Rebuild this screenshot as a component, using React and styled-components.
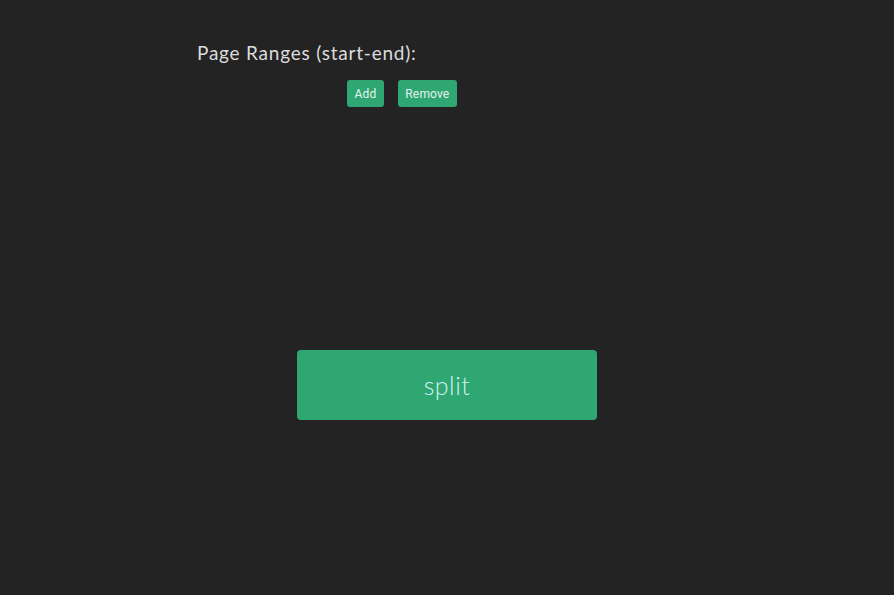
import React from "react";
import styled, { createGlobalStyle } from "styled-components";

const Global = createGlobalStyle`
  html, body { margin: 0; padding: 0; background: #232323; }
  body { width: 894px; height: 595px; overflow: hidden; }
`;

const Page = styled.div`
  width: 894px;
  height: 595px;
  background: #232323;
  display: flex;
  flex-direction: column;
  align-items: center;
  padding-top: 42px;
  box-sizing: border-box;
`;

const Form = styled.div`
  width: 500px;
  display: flex;
  flex-direction: column;
`;

const Label = styled.div`
  font-family: "Lato", "Open Sans", sans-serif;
  font-size: 19px;
  color: #dcdcdc;
  letter-spacing: 0.78px;
  line-height: 22px;
`;

const ButtonRow = styled.div`
  display: flex;
  gap: 14px;
  margin-top: 16px;
  padding-left: 150px;
`;

const SmallButton = styled.button`
  height: 27px;
  padding: 0 7.5px;
  border: none;
  border-radius: 3px;
  background: #2ea772;
  color: #e4f2ee;
  font-family: "Roboto", "Liberation Sans", sans-serif;
  font-size: 12px;
  letter-spacing: 0.15px;
  cursor: pointer;
`;

const SplitButton = styled.button`
  margin-top: 243px;
  width: 300px;
  height: 70px;
  border: none;
  border-radius: 4px;
  background: #2ea772;
  color: #d4f0ef;
  font-family: "Lato", "Open Sans", sans-serif;
  font-weight: 300;
  font-size: 25px;
  letter-spacing: 0.5px;
  cursor: pointer;
`;

export default function App() {
  return (
    <>
      <Global />
      <Page>
        <Form>
          <Label>Page Ranges (start-end):</Label>
          <ButtonRow>
            <SmallButton>Add</SmallButton>
            <SmallButton>Remove</SmallButton>
          </ButtonRow>
        </Form>
        <SplitButton>split</SplitButton>
      </Page>
    </>
  );
}
